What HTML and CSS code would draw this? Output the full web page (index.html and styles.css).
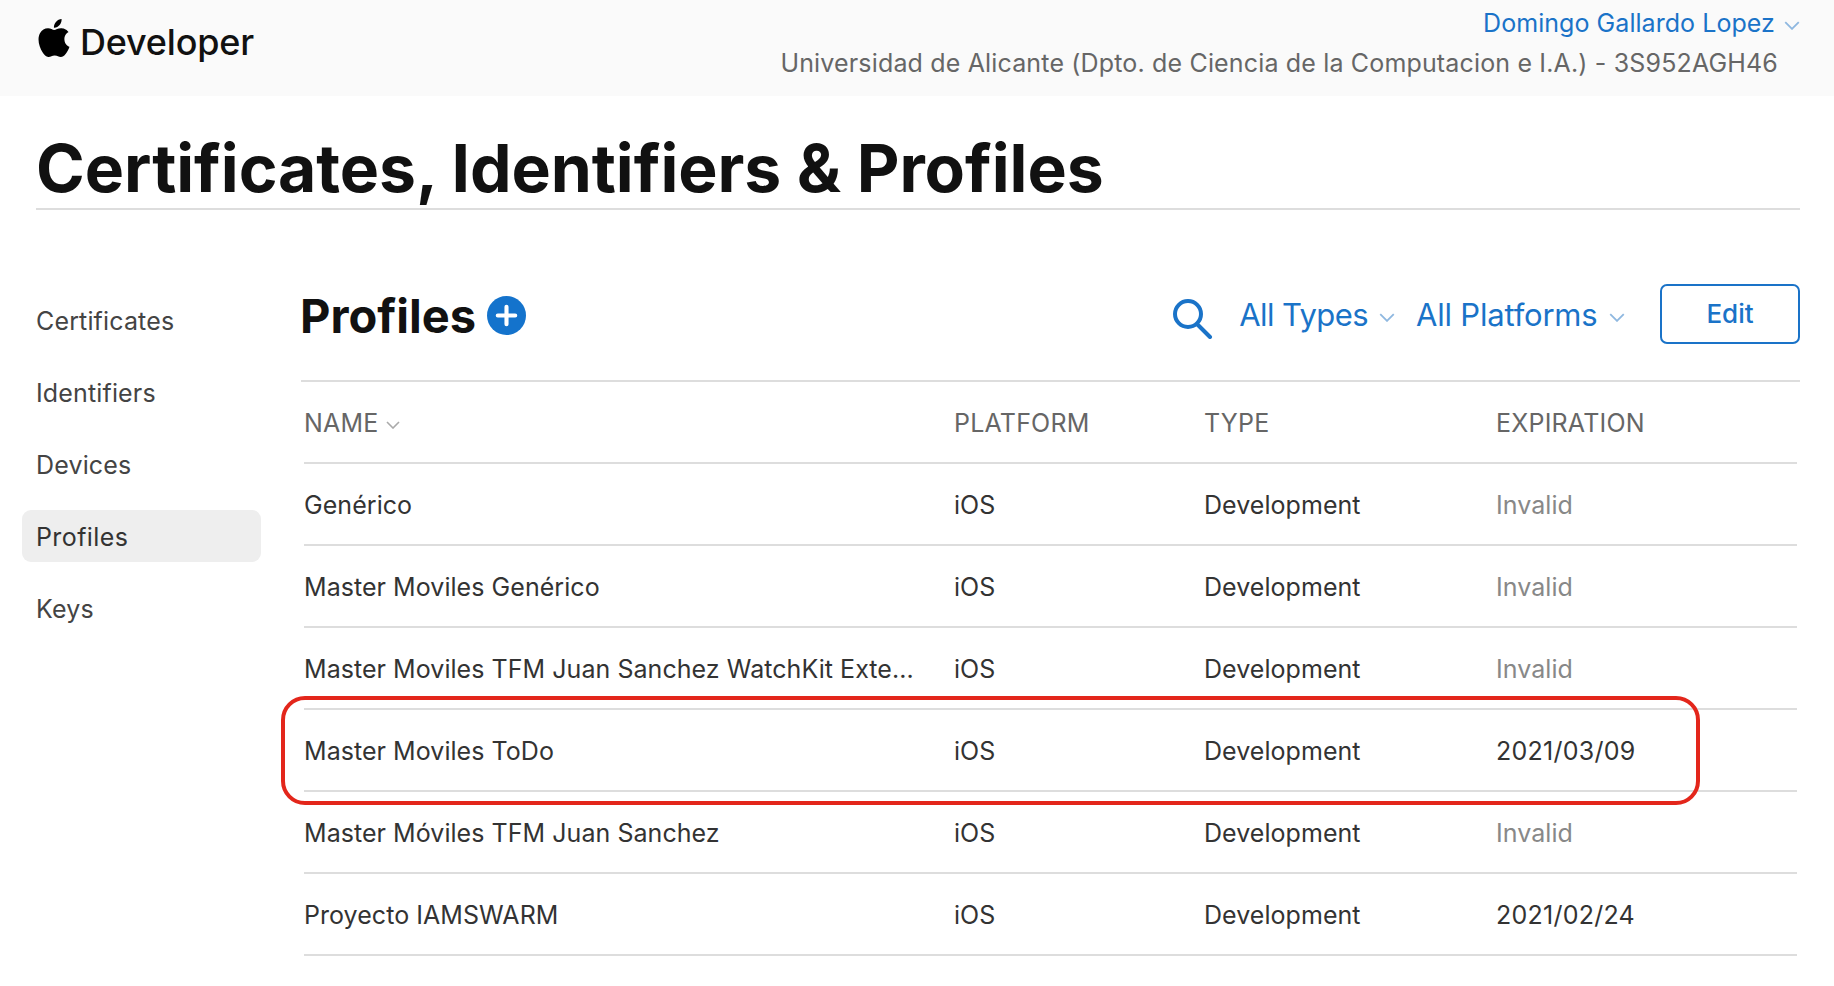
FILE: index.html
```html
<!DOCTYPE html>
<html lang="en">
<head>
  <meta charset="UTF-8" />
  <meta name="viewport" content="width=device-width, initial-scale=1.0"/>
  <title>Certificates, Identifiers &amp; Profiles</title>
  <link rel="stylesheet" href="styles.css">
</head>
<body>
  <header class="topbar">
    <div class="brand">
      <svg class="apple" viewBox="0 0 24 24"><path d="M12.152 6.896c-.948 0-2.415-1.078-3.96-1.04-2.04.027-3.91 1.183-4.961 3.014-2.117 3.675-.546 9.103 1.519 12.09 1.013 1.454 2.208 3.09 3.792 3.039 1.52-.065 2.09-.987 3.935-.987 1.831 0 2.35.987 3.96.948 1.637-.026 2.676-1.48 3.676-2.948 1.156-1.688 1.636-3.325 1.662-3.415-.039-.013-3.182-1.221-3.22-4.857-.026-3.04 2.48-4.494 2.597-4.559-1.429-2.09-3.623-2.324-4.39-2.376-2-.156-3.675 1.09-4.61 1.09zM15.53 3.83c.843-1.012 1.4-2.427 1.245-3.83-1.207.052-2.662.805-3.532 1.818-.78.896-1.454 2.338-1.273 3.714 1.338.104 2.715-.688 3.559-1.701"/></svg>
      <span class="brand-name">Developer</span>
    </div>
    <div class="account">
      <div class="account-name">Domingo Gallardo Lopez <svg class="chev chev-sm" viewBox="0 0 14 8"><path d="M1 1l6 6 6-6"/></svg></div>
      <div class="account-team">Universidad de Alicante (Dpto. de Ciencia de la Computacion e I.A.) - 3S952AGH46</div>
    </div>
  </header>

  <h1 class="page-title">Certificates, Identifiers &amp; Profiles</h1>

  <div class="layout">
    <nav class="sidebar">
      <a>Certificates</a>
      <a>Identifiers</a>
      <a>Devices</a>
      <a class="active">Profiles</a>
      <a>Keys</a>
    </nav>

    <main class="content">
      <div class="content-head">
        <h2>Profiles</h2>
        <svg class="add" viewBox="0 0 38 38"><circle cx="19" cy="19" r="19"/><path d="M19 10.500v17M10.500 19h17"/></svg>
        <div class="tools">
          <svg class="search" viewBox="0 0 40 40"><circle cx="15" cy="15" r="13"/><path d="M25 26l12 12"/></svg>
          <span class="filter filter-types">All Types <svg class="chev" viewBox="0 0 14 8"><path d="M1 1l6 6 6-6"/></svg></span>
          <span class="filter filter-platforms">All Platforms <svg class="chev" viewBox="0 0 14 8"><path d="M1 1l6 6 6-6"/></svg></span>
          <button class="edit">Edit</button>
        </div>
      </div>

      <div class="table-wrap">
        <table>
          <thead>
            <tr><th class="c-name">NAME <svg class="chev chev-grey" viewBox="0 0 14 8"><path d="M1 1l6 6 6-6"/></svg></th><th class="c-plat">PLATFORM</th><th class="c-type">TYPE</th><th>EXPIRATION</th></tr>
          </thead>
          <tbody>
            <tr><td>Genérico</td><td>iOS</td><td>Development</td><td class="invalid">Invalid</td></tr>
            <tr><td>Master Moviles Genérico</td><td>iOS</td><td>Development</td><td class="invalid">Invalid</td></tr>
            <tr><td>Master Moviles TFM Juan Sanchez WatchKit Exte...</td><td>iOS</td><td>Development</td><td class="invalid">Invalid</td></tr>
            <tr><td>Master Moviles ToDo</td><td>iOS</td><td>Development</td><td class="date">2021/03/09</td></tr>
            <tr><td>Master Móviles TFM Juan Sanchez</td><td>iOS</td><td>Development</td><td class="invalid">Invalid</td></tr>
            <tr><td>Proyecto IAMSWARM</td><td>iOS</td><td>Development</td><td class="date">2021/02/24</td></tr>
          </tbody>
        </table>
        <div class="highlight"></div>
      </div>
    </main>
  </div>
</body>
</html>
```

FILE: styles.css
```css
body { margin: 0; background: #fff; font-family: Inter, "Liberation Sans", sans-serif; color: #333; overflow: hidden; }

.topbar { height: 96px; background: #fafafa; display: flex; justify-content: space-between; box-sizing: border-box; padding: 0 34px 0 38px; }
.brand { display: flex; align-items: flex-start; padding-top: 19px; }
.apple { width: 38px; height: 38px; margin-left: -3px; fill: #000; }
.brand-name { font-size: 36px; font-weight: 500; line-height: 46px; margin-left: 7px; color: #111; letter-spacing: -.2px; }
.account { text-align: right; }
.account-name { color: #1a73c8; font-size: 25px; line-height: 30px; margin-top: 8px; letter-spacing: .05px; }
.account-team { color: #666; font-size: 25px; line-height: 30px; margin-top: 10px; padding-right: 22px; letter-spacing: .16px; }

.chev { width: 16px; height: 9px; fill: none; stroke: #8fb8e0; stroke-width: 1.6; vertical-align: middle; }
.chev-sm { margin-left: 2px; }
.chev-grey { stroke: #aaa; width: 14px; height: 8px; }

.page-title { margin: 0 34px 0 36px; height: 114px; box-sizing: border-box; border-bottom: 2px solid #ddd; font-size: 66px; line-height: 145px; font-weight: 700; color: #111; white-space: nowrap; letter-spacing: -.06px; }

.layout { display: flex; }

.sidebar { width: 239px; margin-left: 22px; padding-top: 84px; display: flex; flex-direction: column; gap: 20px; font-size: 25px; letter-spacing: .15px; }
.sidebar a { height: 52px; line-height: 54px; padding-left: 14px; border-radius: 9px; color: #444; }
.sidebar a.active { background: #eee; color: #333; letter-spacing: .4px; }

.content { width: 1499px; margin-left: 40px; }
.content-head { height: 172px; box-sizing: border-box; border-bottom: 2px solid #ddd; display: flex; align-items: flex-start; padding-top: 74px; }
.content-head h2 { margin: 0 0 0 -1px; font-size: 47px; line-height: 64px; font-weight: 700; color: #111; }
.add { width: 39px; height: 39px; margin: 12px 0 0 11px; }
.add circle { fill: #1473cc; }
.add path { stroke: #fff; stroke-width: 4; stroke-linecap: round; fill: none; }
.tools { margin-left: auto; display: flex; align-items: flex-start; }
.search { width: 40px; height: 40px; margin-top: 15px; fill: none; stroke: #1a73c8; stroke-width: 4; stroke-linecap: round; }
.filter { color: #1a73c8; font-size: 31px; line-height: 62px; white-space: nowrap; letter-spacing: -0.2px; }
.filter-types { margin-left: 26px; letter-spacing: -0.6px; }
.filter-platforms { margin-left: 21px; }
.filter .chev { margin-left: 3px; }
.edit { width: 140px; height: 60px; margin: 0 0 0 35px; padding: 0 0 2px; box-sizing: border-box; background: #fff; border: 2px solid #1a73c8; border-radius: 7px; color: #1a73c8; font: 500 26px Inter, sans-serif; }

.table-wrap { position: relative; margin-left: 3px; margin-right: 3px; }
table { width: 100%; border-collapse: collapse; table-layout: fixed; font-size: 25px; letter-spacing: .05px; }
th, td { height: 78px; padding: 2px 0 0; border-bottom: 2px solid #ddd; text-align: left; white-space: nowrap; font-weight: 400; }
th { color: #666; letter-spacing: .2px; }
td { color: #333; }
.c-name { width: 650px; }
.c-plat { width: 250px; }
.c-type { width: 292px; }
.invalid { color: #888; }
.date { letter-spacing: .25px; }

.highlight { position: absolute; left: -23px; top: 314px; width: 1419px; height: 109px; box-sizing: border-box; border: 4px solid #e3261b; border-radius: 24px; }
```
